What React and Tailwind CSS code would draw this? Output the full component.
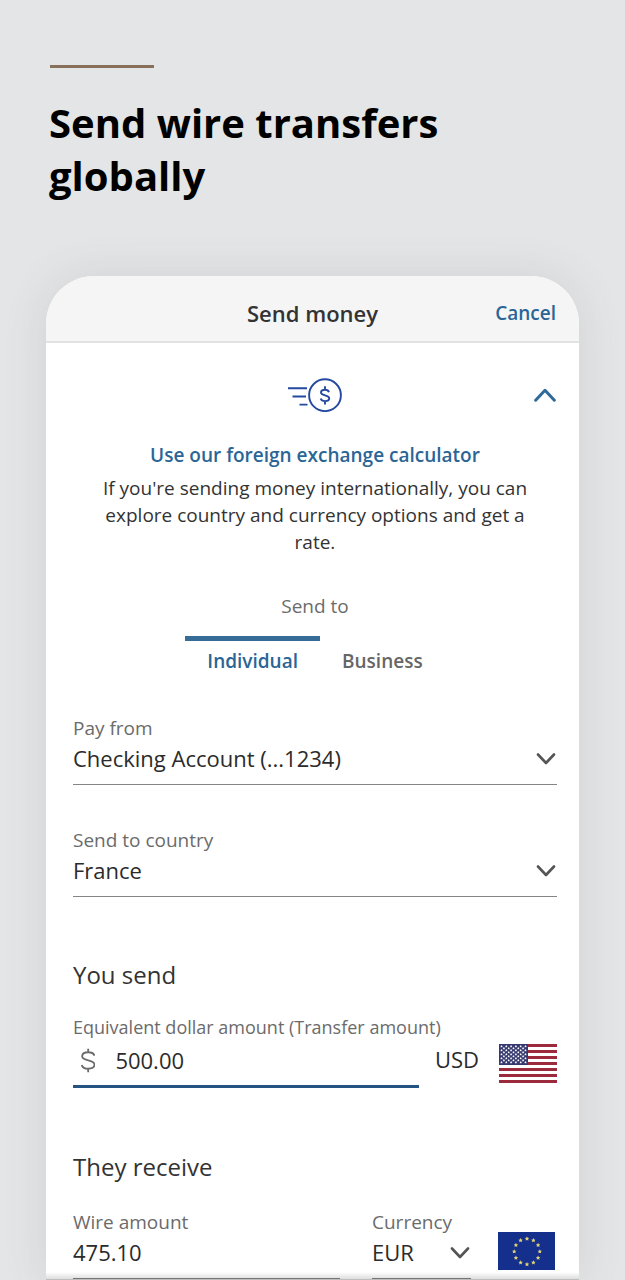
import { useState } from "react";

const STAR = "M0 -1 L0.300 -0.380 L0.951 -0.309 L0.480 0.160 L0.588 0.809 L0 0.520 L-0.588 0.809 L-0.480 0.160 L-0.951 -0.309 L-0.300 -0.380 Z";

function Chevron({ className }) {
  return (
    <svg className={className} viewBox="0 0 20 12" fill="none" stroke="currentColor" strokeWidth="2.6" strokeLinecap="round" strokeLinejoin="round" aria-hidden="true">
      <path d="M2 1.5 L10 10 L18 1.5" />
    </svg>
  );
}

function MoneyIcon() {
  return (
    <svg className="h-[34px] w-[54px]" viewBox="0 0 54 34" fill="none" stroke="#2549a0" strokeWidth="1.9" aria-hidden="true">
      <circle cx="37" cy="17.2" r="15.9" />
      <path d="M0 10.3h19M4.5 18.5h13.5M11.5 26.6h8" />
      <path d="M37 8.2v3.600M37 22.800v3.800M41 14.200c-.5-1.600-2.100-2.500-4-2.500-2.300 0-4 1.100-4 2.800 0 3.800 8.200 1.800 8.200 5.700 0 1.900-1.900 2.900-4.200 2.900-2.100 0-3.800-.9-4.300-2.600" />
    </svg>
  );
}

function DollarIcon() {
  return (
    <svg className="h-[27px] w-4 text-[#6a6a6a]" viewBox="0 0 16 27" fill="none" stroke="currentColor" strokeWidth="2" aria-hidden="true">
      <path d="M8 .5v4M8 22.5v4M15 8.1C14.3 5.8 11.5 4.3 8 4.3c-3.8 0-6.7 1.6-6.7 4.400C1.300 15 15 11.500 15 18c0 3-3 4.700-7 4.700-3.800 0-6.500-1.700-7.200-4.200" />
    </svg>
  );
}

function UsFlag() {
  const stars = [];
  for (let row = 0; row < 9; row++) {
    const count = row % 2 ? 5 : 6;
    for (let i = 0; i < count; i++) {
      stars.push([(row % 2 ? 4.9 : 2.5) + i * 4.8, 2.3 + row * 2]);
    }
  }
  return (
    <svg className="h-[39px] w-[58px]" viewBox="0 0 58 39" role="img" aria-label="United States">
      <rect width="58" height="39" fill="#fff" />
      {[0, 1, 2, 3, 4, 5, 6].map((i) => (
        <rect key={i} y={i * 6} width="58" height="3" fill="#9b2a3c" />
      ))}
      <rect width="29" height="21" fill="#35386f" />
      {stars.map(([x, y]) => (
        <path key={`${x}-${y}`} d={STAR} transform={`translate(${x} ${y}) scale(1.35)`} fill="#fff" />
      ))}
    </svg>
  );
}

function EuFlag() {
  return (
    <svg className="h-[38px] w-[57px]" viewBox="0 0 57 38" role="img" aria-label="European Union">
      <rect width="57" height="38" fill="#142f8c" />
      {Array.from({ length: 12 }, (_, i) => {
        const a = (i * Math.PI) / 6;
        return (
          <path key={i} d={STAR} transform={`translate(${29 + 12.8 * Math.sin(a)} ${19.5 - 12.8 * Math.cos(a)}) scale(2.3)`} fill="#e2d476" />
        );
      })}
    </svg>
  );
}

function SelectField({ id, label, options, className = "" }) {
  return (
    <div className={`border-b border-[#858585] pb-[10px] ${className}`}>
      <label htmlFor={id} className="block text-[19px] leading-7 text-[#6b6b6b]">{label}</label>
      <div className="relative">
        <select id={id} className="block h-8 w-full appearance-none bg-transparent p-0 pr-8 text-[22px] leading-8 text-[#2b2b2b] outline-none">
          {options.map((o) => <option key={o}>{o}</option>)}
        </select>
        <Chevron className="pointer-events-none absolute top-[11px] right-[1px] h-3 w-5 text-[#555]" />
      </div>
    </div>
  );
}

export default function App() {
  const [tab, setTab] = useState("Individual");
  const [open, setOpen] = useState(true);

  return (
    <main className="min-h-screen overflow-hidden bg-[#e3e5e6] px-[46px] pt-[65px] font-['Open_Sans','Noto_Sans',sans-serif]">
      <div className="ml-1 h-[3px] w-[104px] bg-[#89705a]" />
      <h1 className="mt-7 max-w-[420px] pl-[3px] text-[40px] leading-[53px] font-bold text-black">Send wire transfers globally</h1>

      <div className="relative mt-[74px] rounded-t-[48px] bg-white shadow-[0_0_44px_rgba(90,95,90,0.14)]">
        <header className="grid h-[67px] grid-cols-[1fr_auto_1fr] items-center rounded-t-[48px] border-b-2 border-[#e1e2e2] bg-[#f5f5f5] pt-2 pr-[23px] pl-[23px]">
          <h2 className="col-start-2 text-[22px] leading-8 font-semibold text-[#333]">Send money</h2>
          <button type="button" className="justify-self-end text-[19px] leading-8 font-semibold text-[#2a6596]">Cancel</button>
        </header>

        <div className="pt-[35px] pr-[22px] pl-[27px]">
          <section className="flex flex-col items-center">
            <div className="grid w-full grid-cols-[1fr_auto_1fr] items-center">
              <div className="col-start-2"><MoneyIcon /></div>
              <button type="button" aria-label="Toggle calculator details" aria-expanded={open} onClick={() => setOpen(!open)} className="justify-self-end text-[#2f6a98]">
                <Chevron className={open ? "h-[14px] w-6 rotate-180" : "h-[14px] w-6"} />
              </button>
            </div>
            <a href="#calculator" className="mt-[29px] text-[19px] leading-7 font-semibold text-[#2a6596]">Use our foreign exchange calculator</a>
            {open && (
              <p className="mt-[6px] max-w-[440px] text-center text-[19px] leading-[27px] text-[#333]">
                If you're sending money internationally, you can explore country and currency options and get a rate.
              </p>
            )}
          </section>

          <p className="mt-9 text-center text-[19px] leading-7 text-[#6b6b6b]">Send to</p>
          <div role="tablist" aria-label="Send to" className="mt-4 flex justify-center">
            {["Individual", "Business"].map((name) => (
              <button
                key={name}
                type="button"
                role="tab"
                aria-selected={tab === name}
                onClick={() => setTab(name)}
                className={`border-t-[5px] px-[22px] pt-[6px] text-[19px] leading-7 font-semibold ${tab === name ? "border-[#376c99] text-[#2a6596]" : "border-transparent text-[#666]"}`}
              >
                {name}
              </button>
            ))}
          </div>

          <SelectField id="pay-from" label="Pay from" options={["Checking Account (...1234)"]} className="mt-[39px]" />
          <SelectField id="country" label="Send to country" options={["France", "Germany", "Spain"]} className="mt-[41px]" />

          <h3 className="mt-[62px] text-2xl leading-8 text-[#333]">You send</h3>
          <label htmlFor="amount" className="mt-[22px] block text-[18px] leading-7 text-[#6b6b6b]">Equivalent dollar amount (Transfer amount)</label>
          <div className="flex items-start">
            <div className="mr-4 flex min-w-0 flex-1 items-center border-b-[3px] border-[#255482] pt-[3px] pb-[9px] pl-2">
              <DollarIcon />
              <input id="amount" inputMode="decimal" defaultValue="500.00" className="ml-5 h-8 w-full min-w-0 bg-transparent text-[22px] leading-8 text-[#2b2b2b] outline-none" />
            </div>
            <span className="mr-5 pt-[2px] text-[22px] leading-8 text-[#2b2b2b]">USD</span>
            <div className="pt-[3px]"><UsFlag /></div>
          </div>

          <h3 className="mt-[63px] text-2xl leading-8 text-[#333]">They receive</h3>
          <div className="mt-[25px] flex items-start">
            <div className="mr-8 min-w-0 flex-1 border-b border-[#858585] pb-[10px]">
              <label htmlFor="wire" className="block text-[19px] leading-7 text-[#6b6b6b]">Wire amount</label>
              <input id="wire" inputMode="decimal" defaultValue="475.10" className="block h-8 w-full bg-transparent text-[22px] leading-8 text-[#2b2b2b] outline-none" />
            </div>
            <SelectField id="currency" label="Currency" options={["EUR", "GBP"]} className="w-[99px]" />
            <div className="mr-[2px] ml-[27px] pt-6"><EuFlag /></div>
          </div>
        </div>
        <div className="h-px bg-[#dcdddd]" />
        <div className="pointer-events-none absolute inset-x-0 bottom-0 h-2 bg-linear-to-b from-transparent to-black/15" />
      </div>
    </main>
  );
}
